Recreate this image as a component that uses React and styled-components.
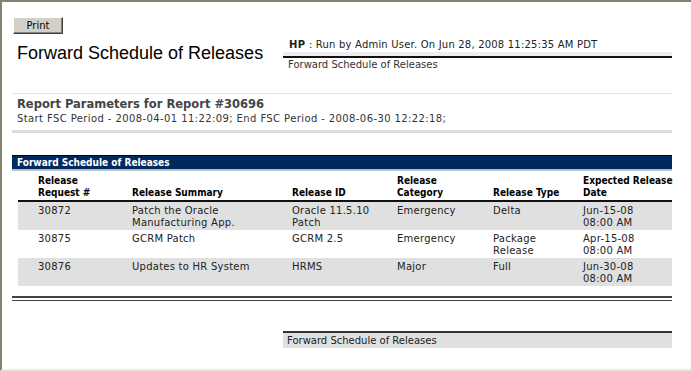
import React from "react";
import styled, { createGlobalStyle } from "styled-components";

const Global = createGlobalStyle`
  html, body { margin: 0; padding: 0; background: #fff; }
  body { font-family: "DejaVu Sans", Verdana, sans-serif; }
  #root { height: 371px; overflow: hidden; }
`;

const Frame = styled.div`
  height: 371px;
  box-sizing: border-box;
  border-top: 2px solid #858170;
  border-left: 2px solid #858170;
  border-bottom: 2px solid #ece9d8;
  background: #fff;
  padding-left: 10px;
  padding-top: 15px;
`;

const Page = styled.div`
  width: 660px;
`;

const PrintButton = styled.button`
  display: block;
  box-sizing: border-box;
  width: 50px;
  height: 17px;
  margin-left: 1px;
  padding: 0;
  background: #d4d0c8;
  border: 1px solid;
  border-color: #fff #404040 #404040 #fff;
  box-shadow: inset -1px -1px 0 #808080;
  font-family: "DejaVu Sans", Verdana, sans-serif;
  font-size: 10px;
  line-height: 13px;
  color: #000;
`;

const HeaderRow = styled.div`
  display: grid;
  grid-template-columns: 271px 389px;
  margin-top: 4px;
  height: 55px;
  border-bottom: 1px solid #e4e4e4;
`;

const Title = styled.h1`
  margin: 5px 0 0 5px;
  font-family: "Liberation Sans", Arial, sans-serif;
  font-weight: normal;
  font-size: 18px;
  line-height: 20px;
  color: #000;
`;

const RunInfo = styled.div`
  display: flex;
  flex-direction: column;
`;

const RunLine = styled.div`
  font-size: 10px;
  letter-spacing: 0.2px;
  color: #222;
  padding: 0 0 1px 6px;
  line-height: 13px;
  border-bottom: 4px solid #eeeeee;
  b { color: #222; letter-spacing: 0.4px; }
`;

const RunSub = styled.div`
  font-size: 10px;
  color: #333;
  padding: 1px 0 0 5px;
  line-height: 12px;
  border-top: 2px solid #111;
`;

const Params = styled.div`
  padding: 4px 0 5px 5px;
  border-bottom: 3px solid #dcdcdc;
`;

const ParamsTitle = styled.div`
  font-weight: bold;
  font-size: 11.5px;
  color: #444;
  line-height: 13px;
`;

const ParamsText = styled.div`
  font-size: 10px;
  letter-spacing: 0.4px;
  color: #333;
  line-height: 13px;
  margin-top: 1px;
`;

const BoldFace = `
  font-family: "DejaVu Sans Condensed", "DejaVu Sans", Verdana, sans-serif;
  font-stretch: condensed;
  font-weight: bold;
`;

const SectionBar = styled.div`
  ${BoldFace};
  margin-top: 22px;
  background: #002a5e;
  border-top: 1px solid #000;
  border-bottom: 2px solid #b8c0c8;
  color: #fff;
  font-size: 10px;
  line-height: 13px;
  padding-left: 5px;
`;

const Table = styled.div`
  margin-left: 6px;
  display: grid;
  grid-template-columns: 114px 160px 105px 96px 90px 89px;
`;

const HeadCell = styled.div`
  ${BoldFace};
  display: flex;
  align-items: flex-end;
  font-size: 10px;
  line-height: 12px;
  color: #000;
  padding: 4px 0 1px ${(p) => (p.$first ? "20px" : "0")};
  border-bottom: 2px solid #111;
  white-space: nowrap;
`;

const Cell = styled.div`
  font-size: 10px;
  line-height: 12px;
  color: #222;
  letter-spacing: 0.25px;
  height: 28px;
  box-sizing: border-box;
  padding: 3px 0 0 ${(p) => (p.$first ? "20px" : "0")};
  background: ${(p) => (p.$shade ? "#e0e0e0" : "#fff")};
`;

const DoubleRule = styled.div`
  margin-top: 10px;
  height: 2px;
  border-top: 2px solid #444;
  border-bottom: 1px solid #444;
`;

const Footer = styled.div`
  margin: 30px 0 0 271px;
  border-top: 2px solid #333;
  background: #e0e0e0;
  font-size: 10px;
  color: #222;
  line-height: 15px;
  padding-left: 4px;
`;

const headers = [
  ["Release", "Request #"],
  ["Release Summary"],
  ["Release ID"],
  ["Release", "Category"],
  ["Release Type"],
  ["Expected Release", "Date"],
];

const rows = [
  [["30872"], ["Patch the Oracle", "Manufacturing App."], ["Oracle 11.5.10", "Patch"], ["Emergency"], ["Delta"], ["Jun-15-08", "08:00 AM"]],
  [["30875"], ["GCRM Patch"], ["GCRM 2.5"], ["Emergency"], ["Package", "Release"], ["Apr-15-08", "08:00 AM"]],
  [["30876"], ["Updates to HR System"], ["HRMS"], ["Major"], ["Full"], ["Jun-30-08", "08:00 AM"]],
];

const lines = (arr) =>
  arr.map((t, i) => (
    <React.Fragment key={i}>
      {i > 0 && <br />}
      {t}
    </React.Fragment>
  ));

export default function App() {
  return (
    <>
      <Global />
      <Frame>
        <Page>
          <PrintButton>Print</PrintButton>
          <HeaderRow>
            <Title>Forward Schedule of Releases</Title>
            <RunInfo>
              <RunLine>
                <b>HP</b> : Run by Admin User. On Jun 28, 2008 11:25:35 AM PDT
              </RunLine>
              <RunSub>Forward Schedule of Releases</RunSub>
            </RunInfo>
          </HeaderRow>
          <Params>
            <ParamsTitle>Report Parameters for Report #30696</ParamsTitle>
            <ParamsText>
              Start FSC Period - 2008-04-01 11:22:09; End FSC Period - 2008-06-30 12:22:18;
            </ParamsText>
          </Params>
          <SectionBar>Forward Schedule of Releases</SectionBar>
          <Table>
            {headers.map((h, i) => (
              <HeadCell key={i} $first={i === 0}>
                <span>{lines(h)}</span>
              </HeadCell>
            ))}
            {rows.map((r, ri) =>
              r.map((c, ci) => (
                <Cell key={`${ri}-${ci}`} $first={ci === 0} $shade={ri !== 1}>
                  {lines(c)}
                </Cell>
              ))
            )}
          </Table>
          <DoubleRule />
          <Footer>Forward Schedule of Releases</Footer>
        </Page>
      </Frame>
    </>
  );
}
